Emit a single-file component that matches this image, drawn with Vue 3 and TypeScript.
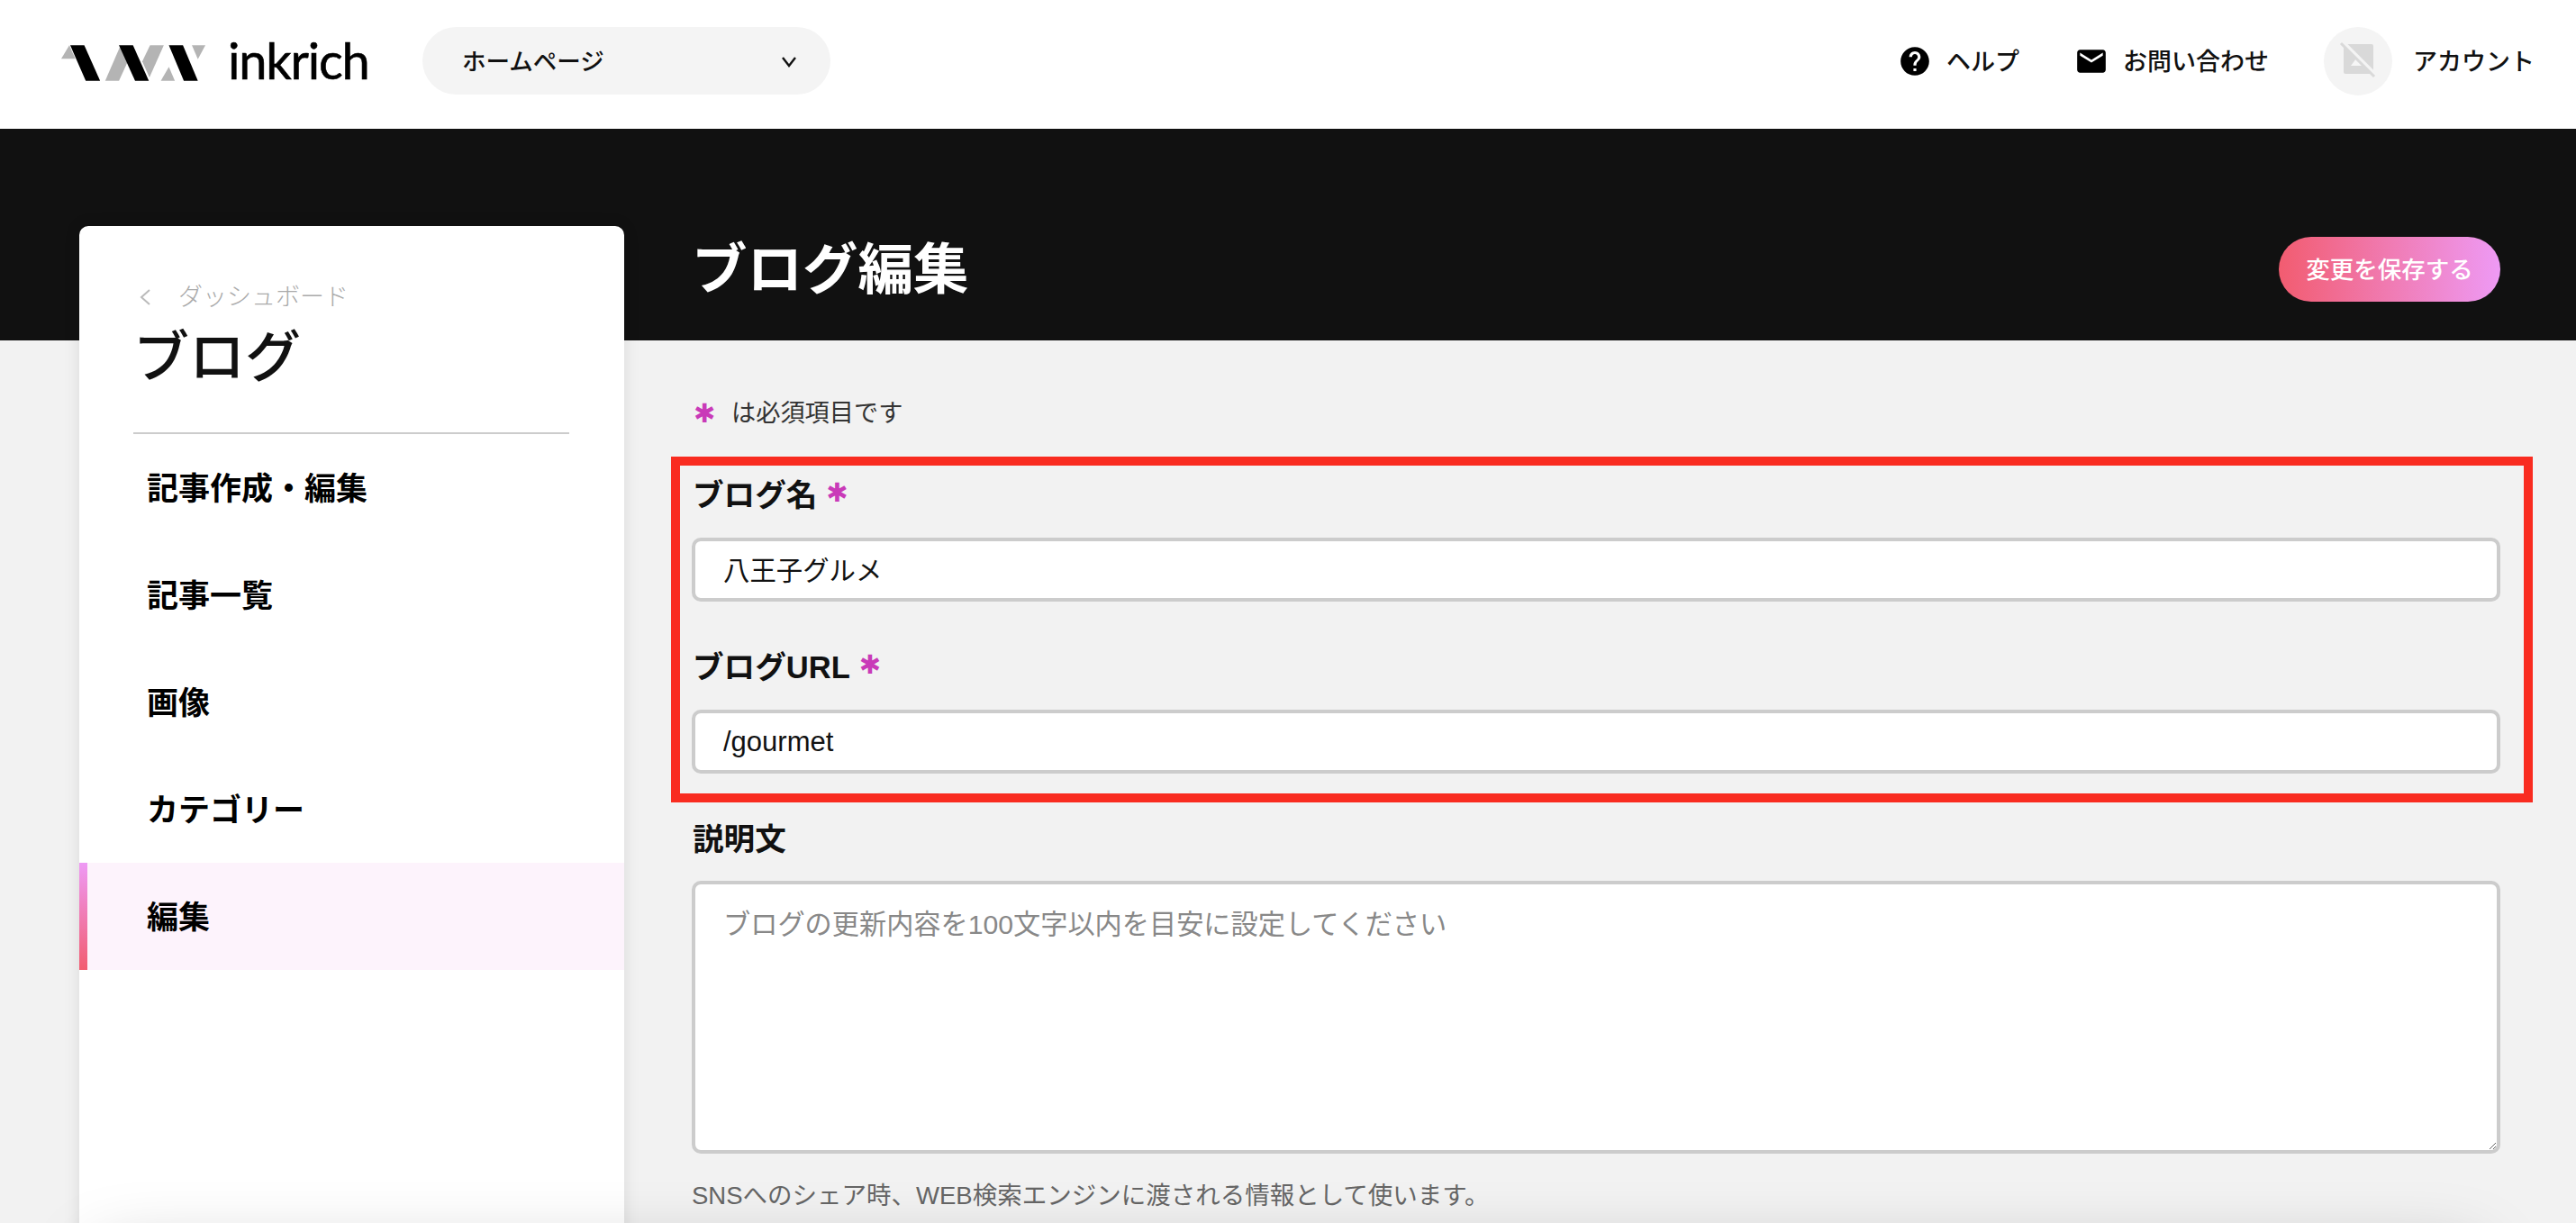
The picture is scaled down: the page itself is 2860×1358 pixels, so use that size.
<script setup lang="ts">
import { ref } from 'vue'

interface NavItem {
  label: string
  active?: boolean
}

const navItems: NavItem[] = [
  { label: '記事作成・編集' },
  { label: '記事一覧' },
  { label: '画像' },
  { label: 'カテゴリー' },
  { label: '編集', active: true }
]

const blogName = ref('八王子グルメ')
const blogUrl = ref('/gourmet')
const description = ref('')
</script>

<template>
  <div class="page">
    <header class="topbar">
      <div class="topbar-left">
        <a class="brand">
          <svg class="brand-mark" viewBox="25 88 482 119" width="160" height="40">
            <g fill="#b4b4b4">
              <path d="M25 133 52 88 72 133z" />
              <path d="M172 207 222 92 246 146 218 207z" />
              <path d="M322 88H368L320 196 296 142z" />
              <path d="M358 207 385 160 405 207z" />
              <path d="M462 88H507L482 135z" />
            </g>
            <g fill="#000">
              <path d="M55 88H102L155 207H107z" />
              <path d="M218 88H265L318 207H272z" />
              <path d="M385 88H432L482 207H435z" />
            </g>
          </svg>
          <span class="brand-name">inkrich</span>
        </a>
        <div class="site-select">
          <span>ホームページ</span>
          <svg viewBox="0 0 16 16" width="16" height="16" class="select-chevron">
            <path d="M1 4l7 9 7-9" fill="none" stroke="#111" stroke-width="2.4" />
          </svg>
        </div>
      </div>
      <nav class="topbar-right">
        <a class="top-link">
          <svg viewBox="0 0 24 24" width="38" height="38">
            <path d="M12 2C6.48 2 2 6.48 2 12s4.48 10 10 10 10-4.48 10-10S17.52 2 12 2zm1 17h-2v-2h2v2zm2.07-7.75l-.9.92C13.45 12.9 13 13.5 13 15h-2v-.5c0-1.1.45-2.1 1.17-2.83l1.24-1.26c.37-.36.59-.86.59-1.41 0-1.1-.9-2-2-2s-2 .9-2 2H8c0-2.21 1.79-4 4-4s4 1.79 4 4c0 .88-.36 1.68-.93 2.25z" />
          </svg>
          <span>ヘルプ</span>
        </a>
        <a class="top-link">
          <svg viewBox="0 0 24 24" width="38" height="38">
            <path d="M20 4H4c-1.1 0-1.99.9-1.99 2L2 18c0 1.1.9 2 2 2h16c1.1 0 2-.9 2-2V6c0-1.1-.9-2-2-2zm0 4l-8 5-8-5V6l8 5 8-5v2z" />
          </svg>
          <span>お問い合わせ</span>
        </a>
        <a class="account">
          <span class="avatar">
            <svg viewBox="0 0 76 76" width="76" height="76">
              <rect x="22" y="19" width="33" height="33" rx="2" fill="#d9d9d9" />
              <path d="M30 43l6-8 4 5 2-2 5 5z" fill="#f6f6f6" />
              <path d="M21 17 57 53" stroke="#f4f4f4" stroke-width="5" />
              <path d="M19 18 56 55" stroke="#d9d9d9" stroke-width="3" />
            </svg>
          </span>
          <span>アカウント</span>
        </a>
      </nav>
    </header>

    <div class="layout">
      <aside class="sidebar">
        <div class="sidebar-head">
          <a class="back-link">
            <svg viewBox="0 0 14 20" width="14" height="20">
              <path d="M12 2 3 10l9 8" fill="none" stroke="#bbb" stroke-width="2" />
            </svg>
            <span>ダッシュボード</span>
          </a>
          <h2 class="sidebar-title">ブログ</h2>
        </div>
        <ul class="side-nav">
          <li
            v-for="item in navItems"
            :key="item.label"
            class="side-nav-item"
            :class="{ active: item.active }"
          >
            {{ item.label }}
          </li>
        </ul>
      </aside>

      <main class="content">
        <div class="content-head">
          <h1 class="content-title">ブログ編集</h1>
          <button class="save-button" type="button">変更を保存する</button>
        </div>

        <p class="required-note"><span class="mark">✱</span>は必須項目です</p>

        <div class="marked-fields">
          <div class="field">
            <label class="field-label">ブログ名<span class="mark small">✱</span></label>
            <input v-model="blogName" class="text-input" type="text" />
          </div>
          <div class="field">
            <label class="field-label">ブログURL<span class="mark small">✱</span></label>
            <input v-model="blogUrl" class="text-input url" type="text" />
          </div>
          <div class="highlight"></div>
        </div>

        <div class="field description">
          <label class="field-label">説明文</label>
          <textarea
            v-model="description"
            class="text-area"
            placeholder="ブログの更新内容を100文字以内を目安に設定してください"
          ></textarea>
          <p class="field-help">SNSへのシェア時、WEB検索エンジンに渡される情報として使います。</p>
        </div>
      </main>
    </div>

    <div class="bottom-edge"></div>
  </div>
</template>

<style>
html,
body {
  margin: 0;
  background: #f2f2f2;
}
</style>

<style scoped>
.page {
  position: relative;
  width: 2860px;
  height: 1358px;
  overflow: hidden;
  font-family: 'Liberation Sans', 'Noto Sans CJK JP', sans-serif;
  color: #111;
}

.topbar {
  height: 143px;
  box-sizing: border-box;
  padding: 0 46px 8px 68px;
  display: flex;
  align-items: center;
  justify-content: space-between;
  background: #fff;
}

.topbar-left,
.topbar-right,
.brand,
.top-link,
.account {
  display: flex;
  align-items: center;
}

.brand {
  gap: 25px;
  width: 401px;
}

.brand-mark {
  margin-top: 4px;
}

.brand-name {
  font-family: Lato, sans-serif;
  font-size: 56px;
  line-height: 60px;
  letter-spacing: -1.2px;
  -webkit-text-stroke: 0.6px #000;
  color: #000;
  margin-bottom: 2px;
}

.site-select {
  width: 453px;
  height: 75px;
  box-sizing: border-box;
  padding: 0 38px 0 44px;
  display: flex;
  align-items: center;
  justify-content: space-between;
  border-radius: 38px;
  background: #f4f4f4;
  font-size: 26.5px;
  font-weight: 500;
}

.site-select span {
  margin-bottom: 3px;
}

.topbar-right {
  font-size: 27px;
  font-weight: 500;
}

.topbar-right span:not(.avatar) {
  margin-bottom: 3px;
}

.top-link {
  gap: 16px;
  margin-right: 61px;
}

.account {
  gap: 23px;
}

.avatar {
  width: 76px;
  height: 76px;
  border-radius: 50%;
  background: #f4f4f4;
}

.avatar svg {
  display: block;
}

.layout {
  height: 1215px;
  box-sizing: border-box;
  padding: 108px 84px 0 88px;
  display: flex;
  gap: 75px;
  background: linear-gradient(#111 235px, #f2f2f2 235px);
}

.sidebar {
  width: 605px;
  height: 1200px;
  flex: none;
  border-radius: 10px 10px 0 0;
  background: #fff;
  box-shadow: 0 0 18px rgba(0, 0, 0, 0.1);
}

.sidebar-head {
  margin: 0 61px 0 60px;
  padding: 60px 0 0 6px;
  height: 169px;
  border-bottom: 2px solid #ccc;
}

.back-link {
  display: flex;
  align-items: center;
  gap: 30px;
  font-size: 27px;
  font-weight: 300;
  line-height: 38px;
  color: #aaa;
}

.sidebar-title {
  margin: 5px 0 0 -6px;
  font-size: 62px;
  font-weight: 500;
  line-height: 88px;
}

.side-nav {
  list-style: none;
  margin: 0;
  padding: 0;
}

.side-nav-item {
  height: 119px;
  box-sizing: border-box;
  padding: 0 0 4px 75px;
  display: flex;
  align-items: center;
  font-size: 35px;
  font-weight: 700;
  color: #000;
}

.side-nav-item.active {
  position: relative;
  background: #fdf3fc;
}

.side-nav-item.active::before {
  content: '';
  position: absolute;
  left: 0;
  top: 0;
  bottom: 0;
  width: 9px;
  background: linear-gradient(#ee9af5, #f25c70);
}

.content {
  flex: 1;
  min-width: 0;
  padding-top: 12px;
}

.content-head {
  height: 72px;
  display: flex;
  align-items: center;
  justify-content: space-between;
}

.content-title {
  margin: 0 0 10px;
  font-size: 61.5px;
  font-weight: 700;
  color: #fff;
}

.save-button {
  width: 246px;
  height: 72px;
  padding: 0 0 3px;
  border: 0;
  border-radius: 36px;
  background: linear-gradient(90deg, #f25c70, #ee9af5);
  color: #fff;
  font-family: inherit;
  font-size: 26.5px;
  font-weight: 500;
}

.required-note {
  margin: 104px 0 0 2px;
  height: 40px;
  display: flex;
  align-items: center;
  font-size: 27.2px;
  line-height: 40px;
  color: #333;
}

.mark {
  font-family: 'DejaVu Sans', sans-serif;
  color: #c93ab8;
  font-size: 29px;
  font-weight: 400;
  width: 42px;
}

.mark.small {
  width: auto;
  margin-left: 10px;
}

.marked-fields {
  position: relative;
  margin-top: 45px;
  display: flex;
  flex-direction: column;
  gap: 47px;
}

.highlight {
  position: absolute;
  top: -17px;
  right: -36px;
  bottom: -32px;
  left: -23px;
  border: 10px solid #f92c20;
  pointer-events: none;
}

.field-label {
  display: flex;
  align-items: center;
  height: 46px;
  margin: 0 0 27px 1px;
  font-size: 34.6px;
  font-weight: 700;
  color: #111;
}

.text-input,
.text-area {
  display: block;
  width: 100%;
  box-sizing: border-box;
  border: 4px solid #ccc;
  border-radius: 10px;
  background: #fff;
  outline: 0;
  font-family: inherit;
  color: #111;
  font-size: 29.4px;
}

.text-input {
  height: 71px;
  padding: 0 31px 3px;
}

.text-input.url {
  font-size: 31px;
  padding-bottom: 0;
}

.description {
  margin-top: 47px;
}

.description .field-label {
  margin-bottom: 26px;
}

.text-area {
  height: 303px;
  padding: 26px 31px;
  line-height: 38px;
}

.text-area::placeholder {
  color: #888;
  font-size: 30.2px;
}

.field-help {
  margin: 28px 0 0;
  font-size: 27.5px;
  line-height: 38px;
  color: #666;
}

.bottom-edge {
  position: absolute;
  left: 110px;
  right: 110px;
  top: 1395px;
  height: 60px;
  box-shadow: 0 0 80px rgba(0, 0, 0, 0.28);
  pointer-events: none;
}
</style>
